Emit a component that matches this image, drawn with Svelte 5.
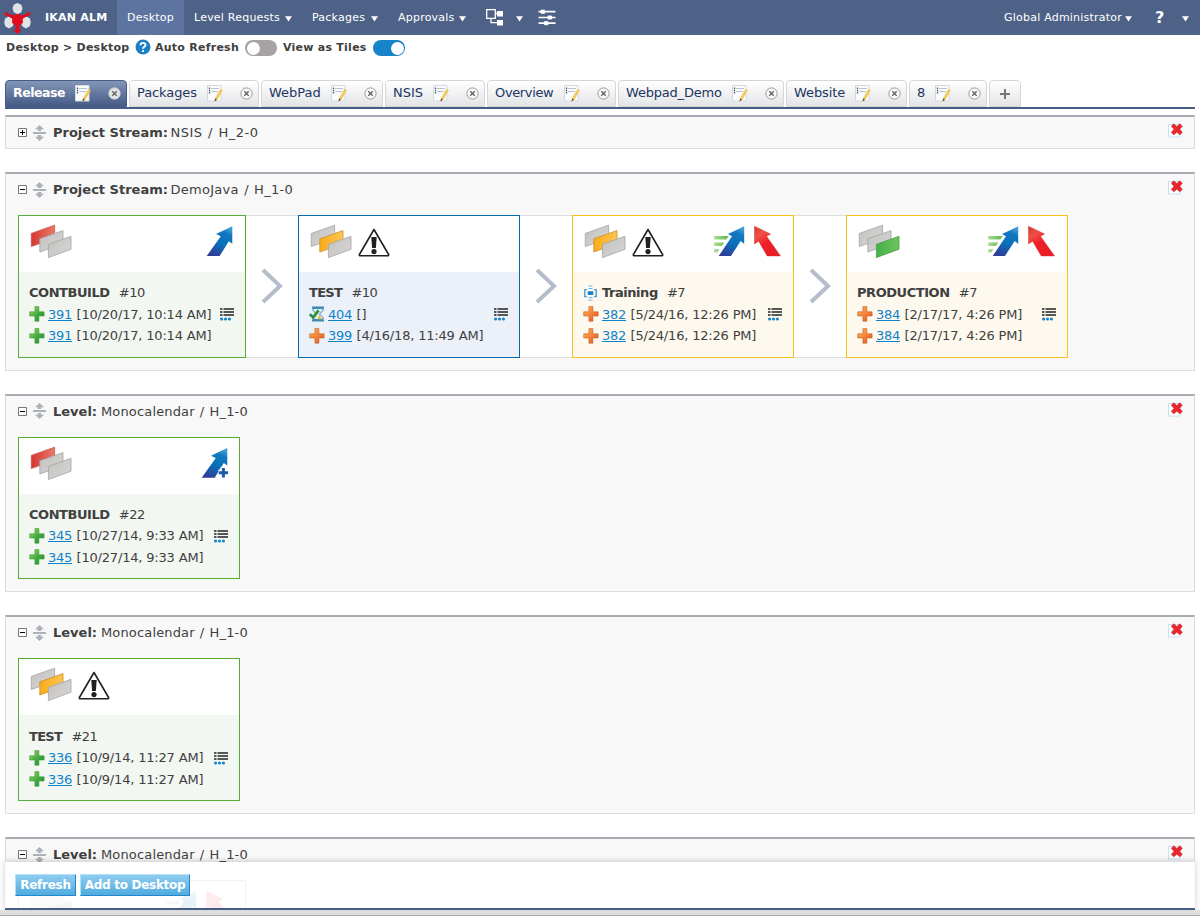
<script>
  const tabs = [
    { name: 'Release', w: 122, ls: -0.45, active: true },
    { name: 'Packages', w: 130, ls: -0.1 },
    { name: 'WebPad', w: 122, ls: 0 },
    { name: 'NSIS', w: 100, ls: 0 },
    { name: 'Overview', w: 129, ls: -0.35 },
    { name: 'Webpad_Demo', w: 166, ls: -0.2 },
    { name: 'Website', w: 121, ls: -0.1 },
    { name: '8', w: 78, ls: 0 }
  ];

  const panels = [
    { kind: 'Project Stream:', name: 'NSIS / H_2-0', ls: 0.5, closed: true, cards: [] },
    {
      kind: 'Project Stream:', name: 'DemoJava / H_1-0', ls: 0.28, cards: [
        { tone: 'green', w: 228, lvl: 0, acts: ['up'], title: 'CONTBUILD', num: '#10', rows: [['ok', '391', '[10/20/17, 10:14 AM]'], ['ok', '391', '[10/20/17, 10:14 AM]']] },
        { tone: 'blue', w: 222, lvl: 1, warn: true, acts: [], title: 'TEST', num: '#10', rows: [['run', '404', '[]'], ['warn', '399', '[4/16/18, 11:49 AM]']] },
        { tone: 'yellow', w: 222, lvl: 1, warn: true, acts: ['fast', 'back'], optional: true, title: 'Training', num: '#7', rows: [['warn', '382', '[5/24/16, 12:26 PM]'], ['warn', '382', '[5/24/16, 12:26 PM]']] },
        { tone: 'yellow', w: 222, lvl: 2, acts: ['fast', 'back'], title: 'PRODUCTION', num: '#7', rows: [['warn', '384', '[2/17/17, 4:26 PM]'], ['warn', '384', '[2/17/17, 4:26 PM]']] }
      ]
    },
    {
      kind: 'Level:', name: 'Monocalendar / H_1-0', ls: 0.15, cards: [
        { tone: 'green', w: 222, lvl: 0, acts: ['add'], title: 'CONTBUILD', num: '#22', rows: [['ok', '345', '[10/27/14, 9:33 AM]'], ['ok', '345', '[10/27/14, 9:33 AM]']] }
      ]
    },
    {
      kind: 'Level:', name: 'Monocalendar / H_1-0', ls: 0.15, cards: [
        { tone: 'green', w: 222, lvl: 1, warn: true, acts: [], title: 'TEST', num: '#21', rows: [['ok', '336', '[10/9/14, 11:27 AM]'], ['ok', '336', '[10/9/14, 11:27 AM]']] }
      ]
    },
    {
      kind: 'Level:', name: 'Monocalendar / H_1-0', ls: 0.15, cards: [
        { tone: 'green', w: 228, lvl: 2, acts: ['fast', 'back'], rows: [] }
      ]
    }
  ];
  const lit = ['url(#g-red)', 'url(#g-amber)', 'url(#g-green)'];
  const edge = ['#c5534c', '#c98e2c', '#4a9a48'];
</script>

{#snippet caret()}
  <svg class="caret" width="7" height="6" viewBox="0 0 7 6"><path d="M0 .3h7L3.5 5.6z" fill="#fff" /></svg>
{/snippet}

{#snippet level(n)}
  <svg width="43" height="36" viewBox="0 0 43 36">
    {#each ['M1.3 9.4 24.6 1.2V14.3L1.3 22.5Z', 'M9.8 14.8 33 6.6V19.7L9.8 28Z', 'M18.4 20.3 41 12.3V25.2L18.4 33.6Z'] as d, i}
      <path {d} fill={i === n ? lit[i] : 'url(#g-grey)'} stroke={i === n ? edge[i] : '#a5a4a3'} stroke-width=".8" />
    {/each}
  </svg>
{/snippet}

{#snippet action(kind)}
  {#if kind === 'up'}
    <svg width="27" height="32" viewBox="0 0 27 32"><path d="M26.3 1.3 10 9 14.8 11.3 .7 31H13.7L22.8 16.3 26.3 18.8Z" fill="url(#g-blue)" /></svg>
  {:else if kind === 'add'}
    <svg class="add" width="28" height="32" viewBox="0 0 28 32"><path d="M26.3 1 10 8.7 14.8 11 .7 30.7H13.7L22.8 16 26.3 18.5Z" fill="url(#g-blue)" /><path d="M22.4 20.5v10M17.4 25.5h10" stroke="#fff" stroke-width="6" /><path d="M22.4 21v9.4M17.7 25.7h9.4" stroke="#1b5ba6" stroke-width="3" /></svg>
  {:else if kind === 'fast'}
    <svg width="31" height="32" viewBox="0 0 31 32">
      <path d="M.2 11h14.4l-2.3 3.400H.2zM.2 17.400h10L7.900 21H.2zM.2 24.200h5.300L3.200 27.600H.2z" fill="url(#g-lime)" />
      <path d="M30.2 1.300 14 9 18 11.300 4.700 31H17L26.700 16.100 30.200 19Z" fill="url(#g-blue)" />
    </svg>
  {:else}
    <svg width="27" height="32" viewBox="0 0 27 32"><path d="M.4 1.3 16.7 9 12.6 11.3 26.5 31H13.2L4.6 16.3 .4 19Z" fill="url(#g-back)" stroke="#c92d2a" stroke-width=".4" /></svg>
  {/if}
{/snippet}

{#snippet status(kind)}
  {#if kind === 'run'}
    <svg width="16" height="16" viewBox="0 0 16 16">
      <path d="M3 1.5h12M3 14.5h12" stroke="#3f8bb5" stroke-width="2" /><path d="M4 2.5h10v2L10.5 8l3.5 3.5v2H4v-2L7.5 8 4 4.5z" fill="#dbeef5" stroke="#3f8bb5" stroke-width="1" />
      <path d="M10.200 8.500l2.800 4.800H8.500z" fill="#f0b93e" /><path d="M.8 8.200l3.400 3.300L9.500 4.300" fill="none" stroke="#2b913c" stroke-width="2.800" />
    </svg>
  {:else}
    <svg width="16" height="16" viewBox="0 0 16 16">
      <path d="M5.900 .6h4V5.800h5.200v4.200H9.900v5.200h-4V10H.7V5.800h5.200z" fill={kind === 'ok' ? 'url(#g-ok)' : 'url(#g-warn)'} stroke={kind === 'ok' ? '#3f9a3a' : '#c4602e'} stroke-width=".6" />
    </svg>
  {/if}
{/snippet}

<svg class="defs" width="0" height="0">
  <defs>
    <linearGradient id="g-grey" x1="0" y1="0" x2="1" y2="1"><stop offset="0" stop-color="#c2c1c0" /><stop offset="1" stop-color="#d8d7d6" /></linearGradient>
    <linearGradient id="g-red"><stop offset="0" stop-color="#d83630" /><stop offset="1" stop-color="#e8796c" /></linearGradient>
    <linearGradient id="g-amber"><stop offset="0" stop-color="#f9ac1b" /><stop offset="1" stop-color="#fcc552" /></linearGradient>
    <linearGradient id="g-green"><stop offset="0" stop-color="#43b149" /><stop offset="1" stop-color="#72c35c" /></linearGradient>
    <linearGradient id="g-blue" x1=".7" y1="0" x2=".3" y2="1"><stop offset="0" stop-color="#3f9bd8" /><stop offset=".2" stop-color="#1377bf" /><stop offset=".55" stop-color="#0871bb" /><stop offset="1" stop-color="#303c96" /></linearGradient>
    <linearGradient id="g-back" x1="0" y1="0" x2=".6" y2="1"><stop offset="0" stop-color="#d9322f" /><stop offset=".3" stop-color="#ee5149" /><stop offset=".6" stop-color="#ee1f27" /><stop offset="1" stop-color="#ec1c24" /></linearGradient>
    <linearGradient id="g-lime"><stop offset="0" stop-color="#a9dc94" /><stop offset="1" stop-color="#55b948" /></linearGradient>
    <linearGradient id="g-ok" x1="0" y1="0" x2="1" y2="1"><stop offset="0" stop-color="#a5db5c" /><stop offset=".5" stop-color="#47ad42" /><stop offset="1" stop-color="#178b35" /></linearGradient>
    <linearGradient id="g-warn" x1="0" y1="0" x2="1" y2="1"><stop offset="0" stop-color="#fbb752" /><stop offset=".5" stop-color="#f5853a" /><stop offset="1" stop-color="#dc4c1d" /></linearGradient>
  </defs>
</svg>

<div class="page">
  <nav>
    <svg class="logo" width="30" height="34" viewBox="0 0 30 34">
      <g fill="#e1e3e6"><path d="M14.500 2l3.800 1.800 1.200 3.500-1.200 4-3.800 2-3.800-2-1.200-4 1.200-3.500zM6 15.500l3.800 1.800 1.200 4-1.200 4L6 27.500l-3.800-2.200-1-4 1-4zM23 15.500l3.800 1.800 1 4-1 4-3.800 2.200-3.800-2.200-1.200-4 1.200-4z" /></g>
      <path d="M1 11.500h4.500L5 13l6 1.200 3.500-1.400 3.500 1.400 6-1.200-.5-1.500H28l-2 4-1-1-5.300 3.200.3 4-3.500 2.800v4.300h2.300L14.500 33l-4.300-4.200h2.300v-4.300L9 21.700l.3-4L4 14.500l-1 1z" fill="#e30b1b" />
    </svg>
    <b class="brand">IKAN ALM</b>
    <span class="item on">Desktop</span>
    <span class="item" style="width:118px"><span>Level Requests</span>{@render caret()}</span>
    <span class="item" style="width:86px"><span>Packages</span>{@render caret()}</span>
    <span class="item" style="width:88px"><span>Approvals</span>{@render caret()}</span>
    <svg class="tree" width="18" height="17" viewBox="0 0 18 17"><path d="M.7.7h8.600v8.600H.7zM5 10v3.700h6M9.500 4.500h2" fill="none" stroke="#fff" stroke-width="1.300" /><path d="M11 2h6v5.500h-6zM11 11h6v5.500h-6z" fill="#fff" /></svg>
    <span class="tree-caret">{@render caret()}</span>
    <svg class="sliders" width="18" height="17" viewBox="0 0 18 17"><path d="M.5 2.700h17M.5 8.500h17M.5 14.200h17" stroke="#fff" stroke-width="1.700" /><path d="M3 1.200h3.600v3H3zM10 7h3.600v3H10zM6.500 12.700H10v3H6.500z" fill="#fff" stroke="#fff" stroke-linejoin="round" /></svg>
    <span class="user"><span>Global Administrator</span>{@render caret()}</span>
    <b class="help">?</b>
    {@render caret()}
  </nav>

  <div class="crumbs">
    <b class="path">Desktop &gt; Desktop</b>
    <svg class="q" width="16" height="16" viewBox="0 0 16 16"><circle cx="8" cy="8" r="7.500" fill="#1b80c4" /><path d="M5.600 6.200C5.600 3.200 10.500 3.200 10.500 6c0 1.700-2.500 1.800-2.500 3.700M8 11v2" fill="none" stroke="#fff" stroke-width="1.900" /></svg>
    <b class="auto">Auto Refresh</b>
    <i class="switch"></i>
    <b class="tiles">View as Tiles</b>
    <i class="switch on"></i>
  </div>

  <div class="tabs">
    {#each tabs as t}
      <div class="tab" class:active={t.active} style="width:{t.w}px">
        <span class="label" style="letter-spacing:{t.ls}px">{t.name}</span>
        <svg width="16" height="17" viewBox="0 0 16 17">
          <path d="M.5.5h13.500v15.500H.5z" fill="#fafbfc" stroke="#d3dae3" />
          <path d="M4 3.500h8M4 6.500h7" stroke="#b7c2d2" stroke-width="1.200" /><path d="M2.500 2.500v6" stroke="#3f4c5c" stroke-width="1.200" stroke-dasharray="1.500 .8" />
          <path d="M13.500 4.200l2 1-5.200 9.300-2.600 1.700.6-3z" fill="#f6cb58" stroke="#e8b849" stroke-width=".4" /><path d="M8.200 13.500l1.700 1.100-2.500 2z" fill="#4c4330" />
        </svg>
        <svg class="x" width="13" height="13" viewBox="0 0 13 13"><circle cx="6.500" cy="6.500" r="5.600" fill={t.active ? '#e4e4e4' : '#fafafa'} stroke={t.active ? '#ddd' : '#999'} /><path d="M4.300 4.300l4.400 4.400M8.700 4.300L4.300 8.700" stroke="#666" stroke-width="1.500" /></svg>
      </div>
    {/each}
    <div class="tab plus"><svg width="10" height="10" viewBox="0 0 10 10"><path d="M5 0v10M0 5h10" stroke="#777" stroke-width="2" /></svg></div>
  </div>

  <main>
    {#each panels as p}
      <section class:closed={p.closed}>
        <header>
          <svg width="9" height="9" viewBox="0 0 9 9"><path d="M.5.500h8v8h-8z" fill="#fff" stroke="#777" /><path d={p.closed ? 'M2 4.500h5M4.500 2v5' : 'M2 4.500h5'} stroke="#000" /></svg>
          <svg class="move" width="13" height="16" viewBox="0 0 13 16"><path d="M6.500 0L11 4.200H8.300V6H4.700V4.200H2zM0 7h13v2H0zM6.500 16L11 11.800H8.300V10H4.700v1.800H2z" fill="#acb0b8" /></svg>
          <b class={p.kind === 'Level:' ? 'k-level' : 'k-stream'}>{p.kind}</b>
          <span class="name" style="letter-spacing:{p.ls}px">{p.name}</span>
          <svg class="del" width="15" height="15" viewBox="0 0 15 15"><path d="M.5 1.500h11.500v12.500H.5z" fill="#fff" stroke="#c4dff0" /><path d="M5.800.8L8.800 3.600 11.800.8 14.300 3.200 11.700 6.300 14.300 9.400 11.800 11.800 8.800 9.200 5.800 11.800 3.300 9.400 6 6.300 3.300 3.200Z" fill="#e8262b" stroke="#c9282b" stroke-width=".6" /></svg>
        </header>
        {#if p.cards.length}
          <div class="flow">
            {#each p.cards as c, i}
              {#if i}
                <div class="link"><svg width="22" height="36" viewBox="0 0 22 36"><path d="M2 2L19 18 2 34" fill="none" stroke="#b5bdcb" stroke-width="4" /></svg></div>
              {/if}
              <article class={c.tone} style="width:{c.w}px">
                <div class="top">
                  {@render level(c.lvl)}
                  {#if c.warn}
                    <svg class="alert" width="32" height="30" viewBox="0 0 32 30"><path d="M16 1.500L30.600 26.500Q31 27.800 29.500 27.800H2.500Q1 27.800 1.400 26.500Z" fill="#fff" stroke="#231f20" stroke-width="1.600" stroke-linejoin="round" /><path d="M13.300 9h5.400l-.8 11h-3.800z" fill="#231f20" /><circle cx="16" cy="23.600" r="2.600" fill="#231f20" /></svg>
                  {/if}
                  <span class="acts">{#each c.acts as a}{@render action(a)}{/each}</span>
                </div>
                <div class="body">
                  {#if c.title}
                    <div class="row title">
                      {#if c.optional}
                        <svg class="opt" width="13" height="16" viewBox="0 0 13 16"><path d="M2.800 4.600H.8v7h2M10.200 4.600h2v7h-2" fill="none" stroke="#3a97d3" stroke-width="1.300" /><path d="M4.500 1h4M4.500 3.500h4M4.500 12.500h4M4.500 15h4" stroke="#69b4e2" stroke-width="1.200" /><path d="M3.700 6.300h5.600v3.600H3.700z" fill="#147fc6" /></svg>
                      {/if}
                      <b class:short={c.title === 'TEST'}>{c.title}</b><span class="num">{c.num}</span>
                    </div>
                  {/if}
                  {#each c.rows as r, j}
                    <div class="row">
                      {@render status(r[0])}
                      <a href="#top">{r[1]}</a><span class="date">{r[2]}</span>
                      {#if j === 0}
                        <svg class="list" width="14" height="14" viewBox="0 0 14 14"><path d="M0 2h2.500M0 5h2.500M0 8h2.500M3.500 2H14M3.500 5H14M3.500 8H14" stroke="#222" stroke-width="1.500" /><g fill="#1a83cb"><circle cx="1.600" cy="12" r="1.600" /><circle cx="5.500" cy="12" r="1.600" /><circle cx="9.400" cy="12" r="1.600" /></g></svg>
                      {/if}
                    </div>
                  {/each}
                </div>
              </article>
            {/each}
          </div>
        {/if}
      </section>
    {/each}
  </main>

  <footer><button style="width:61px">Refresh</button><button style="width:110px">Add to Desktop</button></footer>
  <div class="edge"></div>
</div>

<style>
  :global(body) { margin: 0; background: #fff; }
  .page { position: relative; width: 1200px; height: 916px; overflow: hidden; font-family: Verdana, "DejaVu Sans", sans-serif; font-size: 13px; color: #404040; white-space: nowrap; }
  .page * { box-sizing: border-box; }
  svg { display: block; flex: none; }
  .defs { position: absolute; }
  nav { height: 35px; background: #4e6287; display: flex; align-items: center; color: #fff; font-size: 11px; letter-spacing: .22px; padding: 0 11px 0 3px; }
  .brand { width: 72px; margin-left: 12px; }
  .item { display: flex; align-items: center; justify-content: space-between; padding: 0 10px; height: 35px; }
  .item.on { width: 67px; background: #5d74a1; }
  .caret { margin-top: 2px; }
  .tree { margin-left: 10px; }
  .tree-caret { margin-left: 12px; }
  .sliders { margin-left: 15px; }
  .user { margin-left: auto; width: 128px; display: flex; align-items: center; justify-content: space-between; }
  .help { margin: 0 17px 0 23px; width: 10px; font-size: 16px; }
  .crumbs { height: 45px; display: flex; align-items: flex-start; padding: 4px 6px; font-size: 11px; line-height: 18px; letter-spacing: .25px; }
  .path { width: 129px; }
  .auto { width: 90px; margin-left: 4px; }
  .tiles { width: 90px; margin-left: 6px; }
  .switch { width: 32px; height: 16px; border-radius: 8px; background: #a7a2a3; padding: 1.500px; margin-top: 1px; }
  .switch::after { content: ""; display: block; width: 13px; height: 13px; border-radius: 50%; background: #fff; }
  .switch.on { background: #1783c8; }
  .switch.on::after { margin-left: 16px; }
  .tabs { display: flex; gap: 2px; margin: 0 5px; height: 29px; border-bottom: 2px solid #465b85; }
  .tab { height: 27px; display: flex; align-items: center; border: 1px solid #d6d6d6; border-radius: 4px 4px 0 0; background: linear-gradient(#fff, #e3e4e6); padding: 0 5px 0 7px; color: #223563; }
  .tab .label { flex: 1; line-height: 16px; margin-top: -2px; }
  .tab.active { border-color: #465b85; background: linear-gradient(#8296b8, #465b85); color: #fff; font-weight: bold; font-size: 12.500px; }
  .tab .x { margin-left: 17px; }
  .plus { width: 32px; justify-content: center; padding: 0; }
  main { padding: 6px 5px 0; }
  section { height: 198.650px; margin-bottom: 23px; background: #f8f8f8; border: 1px solid #ddd; border-top: 2px solid #a7abb2; padding: 0 12px; }
  section.closed { height: 34px; margin-bottom: 23.100px; }
  header { height: 31px; display: flex; align-items: center; }
  .move { margin: 0 7px 0 6px; }
  .k-stream { width: 117.500px; }
  .k-level { width: 48px; }
  .name { word-spacing: .900px; }
  .del { margin: -4px -1px 0 auto; }
  .flow { display: flex; margin-top: 10.100px; height: 142.600px; }
  article { border: 1px solid; display: flex; flex-direction: column; background: #fff; }
  .green { border-color: #55ad36; --tint: #f2f7f1; }
  .blue { border-color: #0768ae; --tint: #ecf0f9; }
  .yellow { border-color: #f8c11c; --tint: #fef9ee; }
  .top { height: 56px; display: flex; padding: 8px 12px 0 11px; }
  .alert { margin: 4px 0 0 5px; }
  .acts { margin: 1px 0 0 auto; display: flex; gap: 9px; }
  .add { margin-right: -1.500px; }
  .body { flex: 1; background: var(--tint); padding: 9.900px 11px 0 10px; }
  .row { height: 21.500px; display: flex; align-items: center; }
  .row a { color: #0f82cc; width: 28.500px; margin-left: 3px; letter-spacing: -.27px; }
  .date { letter-spacing: -.18px; }
  .title b { letter-spacing: -.45px; }
  .title b.short { letter-spacing: -.7px; }
  .num { margin-left: 9.200px; letter-spacing: -.5px; }
  .opt { margin: 0 5px 0 1px; }
  .list { margin-left: auto; }
  .link { width: 52px; background: #fff; border: solid #ddd; border-width: 1px 0; display: flex; align-items: center; padding: 0 0 1px 15px; }
  footer { position: absolute; left: 5px; right: 5px; top: 862px; height: 48px; background: rgba(255,255,255,.9); border-bottom: 2px solid #465b85; box-shadow: 0 -1px 6px rgba(0,0,0,.2); padding: 12px 10px; display: flex; gap: 4px; }
  button { height: 22px; border: 1px solid; border-color: #b0e2f8 #2587cb #2587cb #b0e2f8; background: linear-gradient(#8fcdf0, #50abdf); color: #fff; font: bold 12px Verdana, "DejaVu Sans", sans-serif; letter-spacing: -.28px; padding: 0; }
  .edge { position: absolute; left: 0; right: 0; top: 910px; height: 6px; background: #ddd; border-bottom: 1px solid #aaa; }
</style>
